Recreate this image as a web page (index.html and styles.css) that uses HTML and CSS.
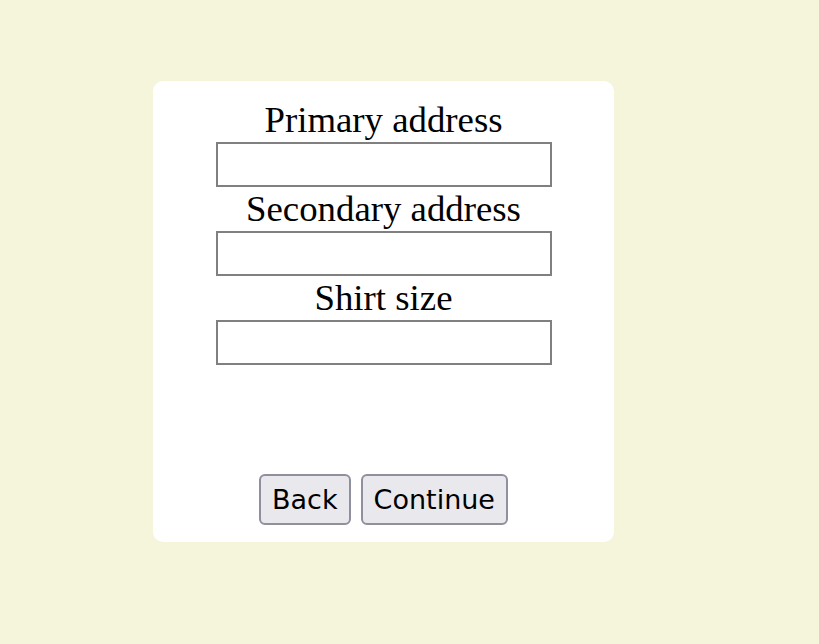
FILE: index.html
```html
<!DOCTYPE html>
<html lang="en">
<head>
    <meta charset="UTF-8" />
    <meta name="viewport" content="width=device-width, initial-scale=1" />
    <title>Details</title>
    <link rel="stylesheet" href="styles.css">
</head>
<body>
    <div class="card">
        <form class="fields">
            <label for="primary">Primary address</label>
            <input type="text" id="primary" name="primary">
            <label for="secondary">Secondary address</label>
            <input type="text" id="secondary" name="secondary">
            <label for="shirt">Shirt size</label>
            <input type="text" id="shirt" name="shirt">
        </form>
        <div class="actions">
            <button type="button">Back</button>
            <button type="button">Continue</button>
        </div>
    </div>
</body>
</html>
```

FILE: styles.css
```css
body {
    margin: 0;
    padding: 81px 0 0 153px;
    background-color: #f5f5dc;
    font-family: "Liberation Serif", "Times New Roman", serif;
}
.card {
    box-sizing: border-box;
    width: 461px;
    height: 461px;
    padding: 17px 0 17px;
    background-color: #ffffff;
    border-radius: 10px;
    display: flex;
    flex-direction: column;
    align-items: center;
}
.fields {
    display: flex;
    flex-direction: column;
    align-items: center;
}
.fields label {
    display: block;
    font-size: 36.8px;
    line-height: 44px;
    color: #000;
}
.fields input {
    box-sizing: border-box;
    width: 336px;
    height: 45px;
    margin: 0;
    border: 2px solid #808080;
    background: #fff;
    font-size: 20px;
}
.fields input:focus {
    outline: none;
}
.actions {
    margin-top: auto;
    display: flex;
    gap: 10px;
}
.actions button {
    font-family: "DejaVu Sans", Verdana, sans-serif;
    font-size: 27px;
    padding: 8px 11px;
    border: 2px solid #8f8f9d;
    border-radius: 6px;
    background-color: #e9e9ed;
    color: #000;
    cursor: pointer;
}
.actions button:hover {
    background-color: #d0d0d7;
}
```
